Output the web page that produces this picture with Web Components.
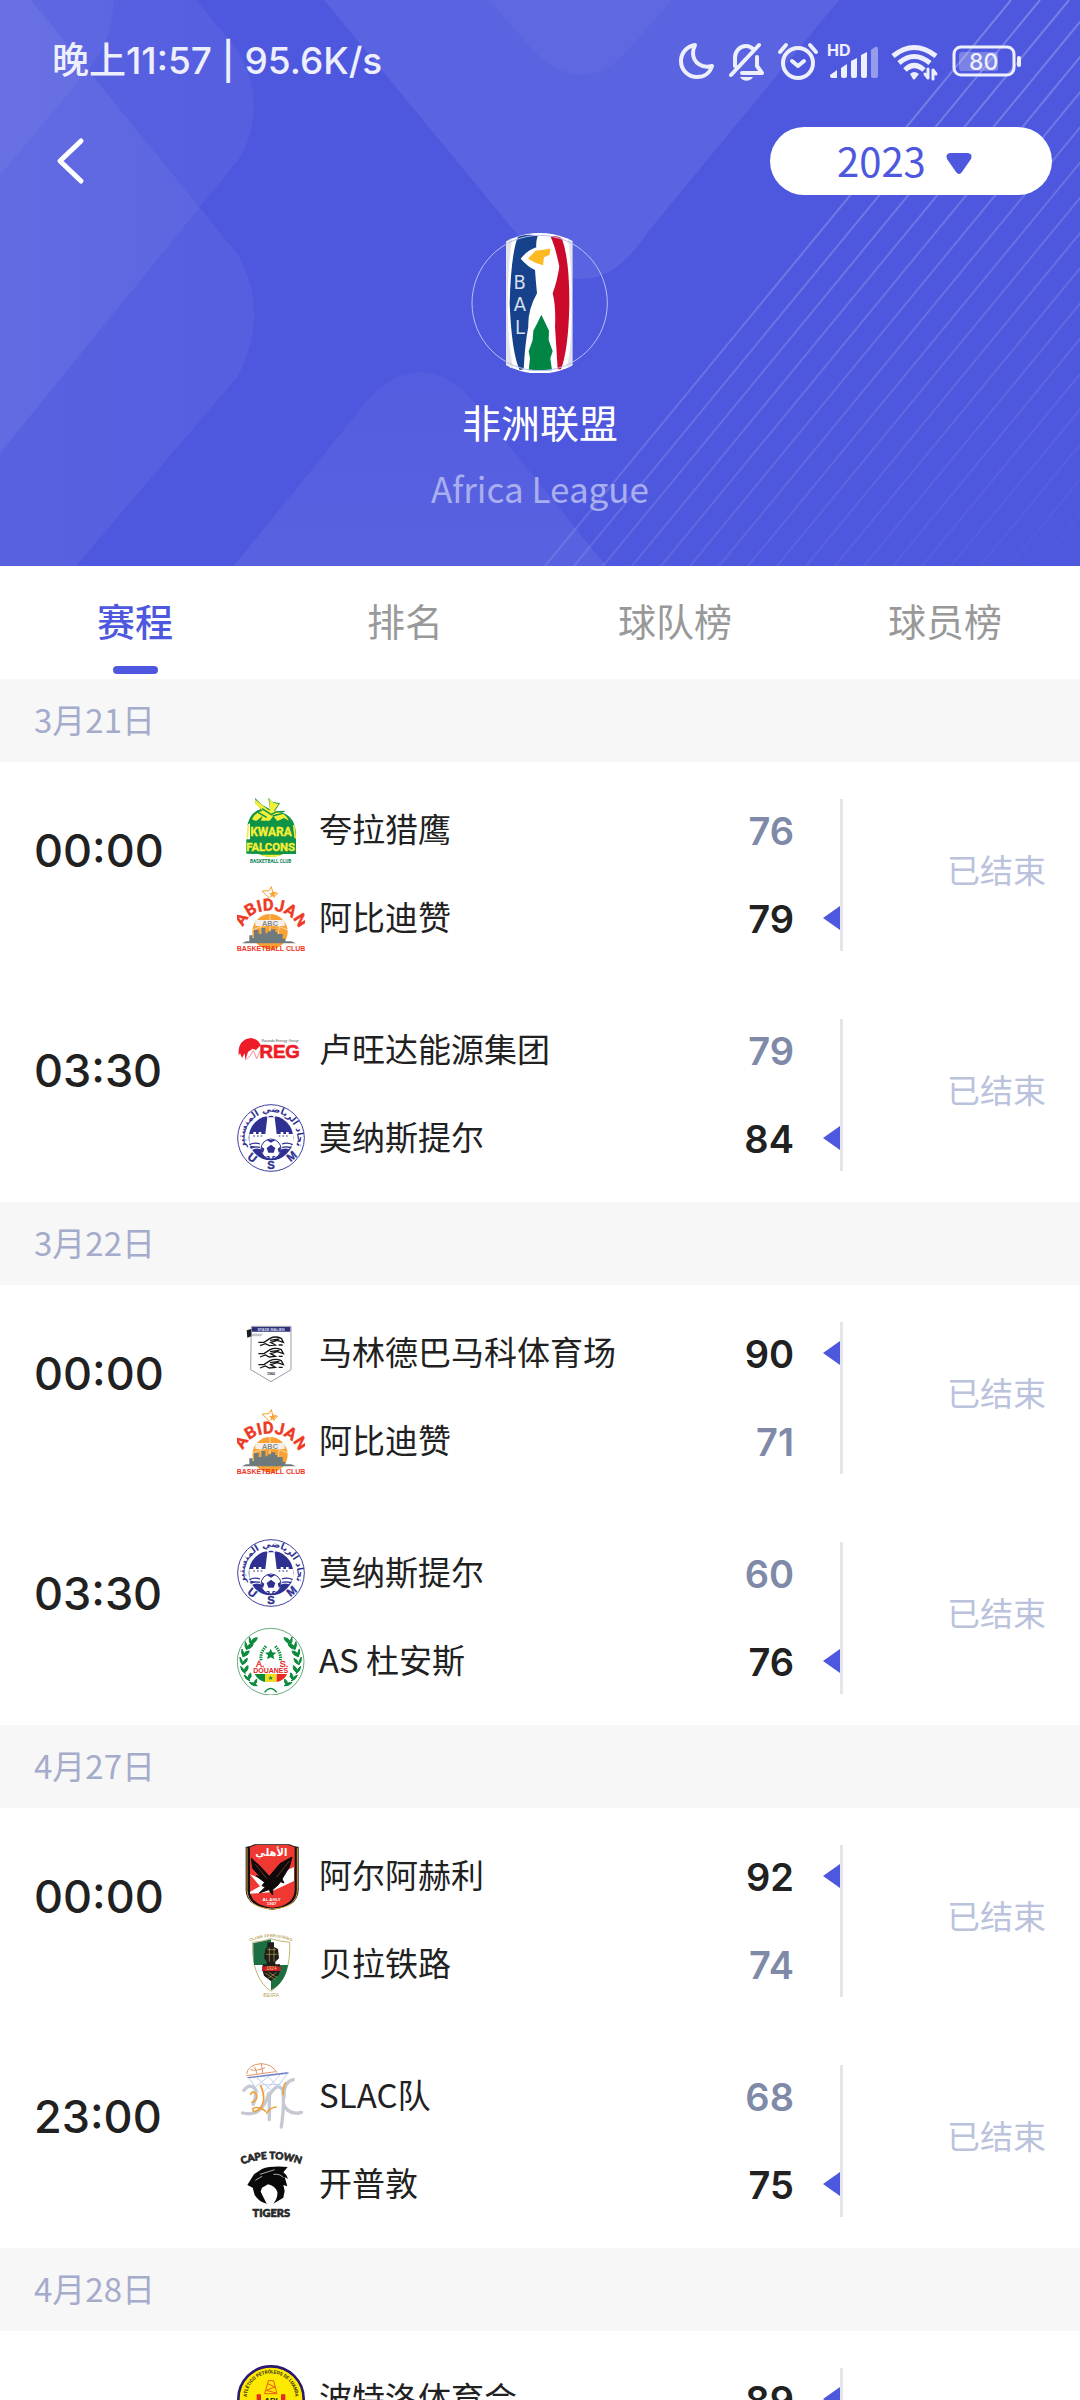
<!DOCTYPE html>
<html lang="zh-CN">
<head>
<meta charset="utf-8">
<meta name="viewport" content="width=device-width, initial-scale=1">
<title>非洲联盟</title>
<style>
  body { margin: 0; background: #fff; font-family: "Noto Sans CJK SC", sans-serif; color: #212121; }
</style>
</head>
<body>
<league-app></league-app>

<template id="tpl-app">
  <style>
    :host { display: flex; flex-direction: column; height: 100vh; overflow: hidden; }
    main { flex: 1; min-height: 0; overflow-y: auto; scrollbar-width: none; }
  </style>
  <league-header name="非洲联盟" subtitle="Africa League">
    <status-bar slot="status"></status-bar>
  </league-header>
  <tab-bar></tab-bar>
  <main></main>
</template>

<template id="tpl-status">
  <style>
    :host { display: flex; align-items: center; justify-content: space-between; height: 122px; padding: 0 58px 0 52px; color: #eeeffc; font-family: Inter, "Noto Sans CJK SC", sans-serif; font-size: 37px; line-height: 48px; font-weight: 500; white-space: nowrap; }
    .icons { display: flex; align-items: center; gap: 12px; }
    svg { display: block; overflow: visible; height: 40px; }
    text { font-family: Inter, sans-serif; fill: #eeeffc; }
    .s { fill: none; stroke: #eeeffc; stroke-width: 4; stroke-linecap: round; stroke-linejoin: round; }
    .f { fill: #eeeffc; }
  </style>
  <span>晚上11:57 | 95.6K/s</span>
  <div class="icons">
    <svg width="36" viewBox="0 0 36 40"><path class="s" d="M17 4C9 5 3 12 3 20c0 9 7 16 16 16 7 0 13-4 15-11-9 3-19-3-19-13 0-3 1-6 2-8z"/></svg>
    <svg width="38" viewBox="0 0 38 40"><path class="s" d="M9 25V17c0-7 5-12 11-12 3 0 5 1 7 3M31 16v9l5 7H16M33 4 5 34"/><path class="f" d="M14 36h13c-3 5-10 5-13 0z"/></svg>
    <svg width="40" viewBox="0 0 40 40"><g class="s"><circle cx="22" cy="22" r="15"/><path d="M16 20l6 5 6-5M4 11l6-7M40 11l-6-7"/></g></svg>
    <svg width="52" viewBox="0 0 52 40"><text x="-1" y="15" font-size="16" font-weight="700">HD</text><path class="f" d="M2 34l7-5v8H4q-2 0-2-2zM13 27l6-4v12q0 2-2 2h-2q-2 0-2-2zM23 20l6-3v18q0 2-2 2h-2q-2 0-2-2zM33 14l6-3v24q0 2-2 2h-2q-2 0-2-2z"/><path class="f" opacity=".45" d="M43 9l4-3q3-1 3 2v27q0 2-2 2h-3q-2 0-2-2z"/></svg>
    <svg width="48" viewBox="0 0 48 40"><g class="s" style="stroke-linecap:butt;stroke-width:5"><path d="M1 15q21-17 43 0M7 22q15-13 31 0M13 29q9-9 19 0"/></g><path class="f" d="M18 33q4-4 9 0l-4 5q-1 1-2 0z"/><path class="s" style="stroke-width:3" d="M36 28v9l-3-4M41 38v-9l3 4"/></svg>
    <svg width="70" viewBox="0 0 70 40"><rect class="s" style="stroke-width:3" x="2" y="6" width="60" height="28" rx="7"/><rect x="7" y="11" width="39" height="19" rx="3" fill="#fff" opacity=".25"/><rect class="f" x="65" y="15" width="4" height="11" rx="2"/><text x="17" y="29" font-size="23" font-weight="500">80</text></svg>
  </div>
</template>

<template id="tpl-header">
  <style>
    :host { display: block; position: relative; height: 566px; background: #4e58de; color: #fff; overflow: hidden; flex: none; }
    .bg { position: absolute; inset: 0; width: 100%; height: 100%; }
    .content { position: relative; display: flex; flex-direction: column; }
    nav { display: flex; align-items: center; justify-content: space-between; height: 78px; padding: 0 28px 0 48px; }
    .back { background: none; border: 0; padding: 0; width: 44px; height: 60px; display: flex; align-items: center; }
    .year { position: relative; display: block; }
    select { appearance: none; display: block; width: 282px; height: 68px; border: 0; border-radius: 34px; background: #fff; color: #4e58de; font: 400 40px/60px "Noto Sans CJK SC", sans-serif; padding: 0 0 3px 67px; }
    .year svg { position: absolute; right: 79px; top: 25px; pointer-events: none; }
    .emblem { align-self: center; margin-top: 33px; }
    .emblem svg { display: block; }
    h1 { margin: 18px 0 0; font-size: 39px; line-height: 60px; font-weight: 400; text-align: center; }
    p { margin: 8px 0 0; font-size: 35px; line-height: 57px; text-align: center; color: #a9aeef; }
  </style>
  <svg class="bg" viewBox="0 0 1080 566" preserveAspectRatio="xMidYMid slice" aria-hidden="true">
    <defs>
      <linearGradient id="sideglow" x1="0" y1="0" x2="1" y2="0"><stop offset="0" stop-color="#fff" stop-opacity=".06"/><stop offset="1" stop-color="#fff" stop-opacity=".04"/></linearGradient>
      <linearGradient id="humpfade" x1="0" y1="0" x2="0" y2="1"><stop offset="0" stop-color="#fff" stop-opacity=".03"/><stop offset="1" stop-color="#fff" stop-opacity=".06"/></linearGradient>
      <linearGradient id="linefade" gradientUnits="userSpaceOnUse" x1="850" y1="100" x2="1080" y2="566"><stop offset="0" stop-color="#fff" stop-opacity=".24"/><stop offset="1" stop-color="#fff" stop-opacity="0"/></linearGradient>
    </defs>
    <path fill="url(#sideglow)" d="M0 0H196L238 51Q270 108 238 160L0 453Z"/>
    <path fill="url(#sideglow)" d="M0 0H31L238 255Q270 312 238 376L76 566H0Z"/>
    <path fill="#fff" opacity=".04" d="M0 0H114Q112 42 88 70L0 175Z"/>
    <path fill="#fff" opacity=".07" d="M324 0L516 233Q548 279 582 279Q617 279 647 233L839 0Z"/>
    <path fill="#fff" opacity=".03" d="M489 0L530 47Q556 75 582 75Q607 75 631 47L672 0Z"/>
    <path fill="url(#humpfade)" d="M234 566L372 395Q396 372 420 372Q444 372 468 395L606 566Z"/>
    <g id="rays" stroke="url(#linefade)" stroke-width="2"></g>
  </svg>
  <div class="content">
    <slot name="status"></slot>
    <nav>
      <button class="back" aria-label="返回"><svg width="44" height="48" viewBox="0 0 44 48"><path d="M33 4L12 24L33 44" fill="none" stroke="#fff" stroke-width="5" stroke-linecap="round" stroke-linejoin="round"/></svg></button>
      <label class="year"><select aria-label="赛季"><option>2023</option></select><svg width="28" height="24" viewBox="0 0 28 24"><path d="M5 1H23Q28 2 26 7L17 20Q14 24 11 20L2 7Q0 2 5 1Z" fill="#4e58de"/></svg></label>
    </nav>
    <div class="emblem">
      <svg width="140" height="140" viewBox="89 69 420 420" role="img" aria-label="BAL">
        <defs><clipPath id="disc"><circle cx="298" cy="280" r="211"/></clipPath></defs>
        <g clip-path="url(#disc)">
          <rect x="197" y="60" width="199" height="440" fill="#fff"/>
          <path d="M197 60h25q-18 60-20 210t24 230h-29zM396 60h-20q18 60 18 220t-22 220h24z" fill="#e3e3e8"/>
          <path d="M233 80Q265 70 292 78Q286 95 288 112Q262 120 241 146Q262 170 284 180Q286 210 290 250Q262 300 264 350Q254 400 250 478L238 480Q214 430 208 280Q212 130 233 80Z" fill="#15428b"/>
          <path d="M330 78Q355 76 365 86Q388 150 387 285Q384 420 362 478H352Q348 410 344 350Q347 290 337 250Q350 215 357 170Q345 110 330 78Z" fill="#cc0a2b"/>
          <path d="M263 146L286 122L330 116L328 134L311 142L308 166L285 158Z" fill="#fdb924"/>
          <path d="M303 314Q318 345 326 362L325 390L337 424L330 445L335 481H265L269 445L265 424L277 390L279 362Q290 342 303 314Z" fill="#008544"/>
          <g fill="#d5deec" font-family="'DejaVu Sans Condensed', 'Open Sans', sans-serif" font-weight="400" font-size="60" text-anchor="middle"><text x="238" y="237">B</text><text x="239" y="304">A</text><text x="239" y="371">L</text></g>
        </g>
        <circle cx="298" cy="279" r="203" fill="none" stroke="#b9bdf6" stroke-width="3"/>
      </svg>
    </div>
    <h1></h1>
    <p></p>
  </div>
</template>

<template id="tpl-tabs">
  <style>
    :host { display: grid; grid-template-columns: repeat(4, 1fr); height: 113px; background: #fff; flex: none; }
    button { display: flex; flex-direction: column; align-items: center; justify-content: flex-end; gap: 16px; border: 0; background: none; padding: 0 0 5px; color: #999; font: 400 38px/60px "Noto Sans CJK SC", sans-serif; }
    button::after { content: ""; width: 45px; height: 8px; border-radius: 4px; }
    button[aria-selected="true"] { color: #4e58de; font-weight: 500; }
    button[aria-selected="true"]::after { background: #4e58de; }
  </style>
</template>

<template id="tpl-day">
  <style>
    :host { display: block; }
    h2 { margin: 0; height: 83px; padding: 0 34px; background: #f7f7f7; color: #a5abcb; font-size: 33px; line-height: 80px; font-weight: 400; }
  </style>
  <h2></h2>
  <slot></slot>
</template>

<template id="tpl-match">
  <style>
    :host { display: flex; padding: 34px 34px 30px; background: #fff; }
    time { width: 203px; line-height: 110px; font-family: Inter, sans-serif; font-size: 45px; font-weight: 500; color: #212121; flex: none; }
    .teams { flex: 1; display: flex; flex-direction: column; gap: 20px; min-width: 0; }
    .rule { width: 3px; margin: 3px 0 1px; background: #e4e5ea; }
    .state { width: 203px; text-align: right; line-height: 147px; font-size: 33px; color: #bac2dc; }
  </style>
  <time></time>
  <div class="teams"><slot></slot></div>
  <div class="rule"></div>
  <div class="state">已结束</div>
</template>

<template id="tpl-team">
  <style>
    :host { display: flex; height: 68px; line-height: 70px; }
    .name { flex: 1; margin-left: 14px; font-size: 33px; line-height: 64px; white-space: nowrap; color: #212121; }
    .score { font-family: Inter, sans-serif; font-size: 38px; font-weight: 600; color: #7f89a8; }
    .mark { width: 17px; height: 24px; margin: 22px 0 0 29px; }
    :host([winner]) .score { color: #212121; }
    :host([winner]) .mark { background: #4e58de; clip-path: polygon(100% 0, 100% 100%, 0 50%); }
  </style>
  <team-logo></team-logo>
  <span class="name"></span>
  <span class="score"></span>
  <span class="mark"></span>
</template>

<script>
const LOGOS = {
  kwara: ['51 48 204 204', `
    <path d="M82 135Q92 95 122 88L105 66V54L126 74L150 88L145 53L158 66L180 70L165 92Q214 98 225 140L228 160V222L190 222Q152 240 116 222L79 221V178H90V130Z" fill="#0f9347"/>
    <path d="M96 118Q104 98 128 92L106 72L105 58L127 76L149 92L148 56L160 68L176 72L162 92Q193 94 207 122L192 114L172 124L160 108L148 124H122L128 108L108 124Z" fill="#f3ee3a"/>
    <path d="M110 95L140 112M126 86L154 104L168 96L194 94M158 108L188 100M95 124H212" stroke="#0f9347" stroke-width="4" fill="none"/>
    <path d="M85 135L82 175M221 135L226 175" stroke="#f3ee3a" stroke-width="5"/>
    <g font-family="Roboto, sans-serif" font-weight="700" text-anchor="middle" fill="#f7ee35" stroke="#f7ee35" stroke-width="1"><text x="153" y="168" font-size="36">KWARA</text><text x="152" y="214" font-size="34">FALCONS</text></g>
    <path d="M118 224Q153 238 188 224Z" fill="#f3ee3a"/>
    <text x="152" y="249" font-family="Roboto, sans-serif" font-weight="700" font-size="14" text-anchor="middle" fill="#0b7f5b">BASKETBALL CLUB</text>`],
  abidjan: ['51 312 204 204', `
    <circle cx="150" cy="455" r="53" fill="#f9a134"/>
    <path d="M150 402V490M98 450Q150 420 203 450M112 418Q132 450 122 490M188 418Q168 450 178 490" stroke="#fcd9a4" stroke-width="3" fill="none"/>
    <path d="M135 375Q138 355 148 354L126 333L147 332L154 320L158 336L173 340L160 352" fill="none" stroke="#f9a134" stroke-width="3"/>
    <path d="M158 332l3 7 8 1-6 5 2 8-7-4-7 4 2-8-6-5 8-1z" fill="#f9a134"/>
    <path d="M66 490L78 484H88V466H98V474H102V450H116V462H124V444H136V460H143V454H153V448H166V456H172V462H188V476H196V484H214L228 490Z" fill="#6f7a7d"/>
    <rect x="106" y="420" width="88" height="18" fill="#f4efe8"/><text x="150" y="437" font-family="Liberation Sans, sans-serif" font-weight="700" font-size="22" text-anchor="middle" fill="#858b8d">ABC</text>
    <path id="arcA" d="M68 446Q84 392 150 392Q216 392 238 450" fill="none"/><text font-family="Roboto, sans-serif" font-weight="700" font-size="50" fill="#ee3a24" stroke="#ee3a24"><textPath href="#arcA" startOffset="50%" text-anchor="middle">ABIDJAN</textPath></text>
    <text x="153" y="513" font-family="Liberation Sans, sans-serif" font-weight="700" font-size="21" text-anchor="middle" fill="#f0351f">BASKETBALL CLUB</text>`],
  reg: ['51 48 204 204', `
    <path d="M56 166Q52 118 94 114Q116 118 122 136L108 150L98 146L84 156L76 180L74 160L66 174L60 160Z" fill="#ed1c27"/><path d="M76 180Q94 168 100 152L110 176L122 150" stroke="#f48b8f" stroke-width="3" fill="none"/>
    <text x="180" y="126" font-family="Liberation Sans, sans-serif" font-size="11" text-anchor="middle" fill="#555">Rwanda Energy Group</text>
    <text x="179" y="174" font-family="Liberation Sans, sans-serif" font-weight="700" font-size="56" text-anchor="middle" fill="#ed1c27" stroke="#ed1c27" stroke-width="2">REG</text>`],
  usm: ['51 312 204 204', `
    <circle cx="153" cy="414" r="100" fill="#fff" stroke="#3c3f9d" stroke-width="3"/><circle cx="153" cy="414" r="67" fill="#2e3192"/>
    <path d="M88 402H100V396H108V402H116V396H124V402H136L142 352H164L170 402H182V396H190V402H198V396H206V402H219V435L153 460L88 435Z" fill="#fff"/>
    <path d="M140 352V346H146V352H160V346H166V352" fill="#fff"/>
    <path d="M92 436Q104 428 116 436T140 436M96 448Q108 440 126 446M166 436Q178 428 190 436T214 436M180 448Q192 440 208 446" stroke="#fff" stroke-width="4" fill="none"/>
    <path d="M88 434Q104 426 120 432M186 432Q202 426 218 434M90 444Q104 438 120 442M186 442Q202 438 214 444" stroke="#2e3192" stroke-width="4" fill="none"/>
    <path d="M100 408H130M176 408H206" stroke="#2e3192" stroke-width="3" stroke-dasharray="5 6"/>
    <circle cx="153" cy="447" r="30" fill="#fff" stroke="#2e3192" stroke-width="3"/>
    <path d="M153 434l13 10-5 14h-16l-5-14zM140 420h26l-13 8zM125 440l8 6-4 14-5-8zM181 440l-8 6 4 14 5-8zM138 468l10 0 2 8zM168 468l-10 0-2 8z" fill="#2e3192"/>
    <path id="arcU" d="M79 443A79 79 0 1 1 227 443" fill="none"/><text font-family="DejaVu Sans, sans-serif" font-weight="700" font-size="27" fill="#2e3192"><textPath href="#arcU" startOffset="50%" text-anchor="middle">الاتحاد الرياضي المنستيري</textPath></text>
    <g font-family="Liberation Sans, sans-serif" font-weight="700" font-size="34" text-anchor="middle" fill="#2e3192" stroke="#2e3192"><text transform="translate(90 482) rotate(38)">U</text><text x="153" y="507">S</text><text transform="translate(222 478) rotate(-40)">M</text></g>`],
  malindi: ['51 54 204 204', `
    <path d="M94 76H213V206L153 242L92 206Z" fill="#fff" stroke="#9b9ca6" stroke-width="3"/><path d="M96 78H211V92H96Z" fill="#2b2e79"/>
    <text x="153" y="90" font-family="Liberation Sans, sans-serif" font-size="11" font-weight="700" text-anchor="middle" fill="#dfe0f2">STADE MALIEN</text>
    <path d="M80 88L94 84V106L82 110Z" fill="#1c1c24"/><path d="M96 98h34l-8 8H96z" fill="#c4c5cb"/>
    <g fill="none" stroke="#161616" stroke-width="4"><path id="cheetah" d="M115 124L132 124L150 112Q166 104 184 112L190 124L172 118L152 124L166 132L148 134L136 128L120 134M150 118L178 114M176 132L188 132"/><use href="#cheetah" y="34"/><use href="#cheetah" y="67"/></g>
    <text x="153" y="221" font-family="Liberation Sans, sans-serif" font-weight="700" font-size="11" text-anchor="middle" fill="#222">1960</text>`],
  douanes: ['51 318 204 204', `
    <circle cx="152" cy="422" r="100" fill="#fff" stroke="#16803b" stroke-width="2"/>
    <g id="wreath" fill="#0b8a3c" stroke="#0b8a3c" stroke-width="3"><path d="M112 350q-16 0-20 18 16-2 20-18zM88 348q-2 14 4 22 4-12-4-22zM100 368q-18 0-22 16 18 0 22-16zM76 362q-4 14 4 24 4-12-4-24zM88 390q-16 0-20 16 16 0 20-16zM66 384q-4 12 4 24 4-12-4-24zM82 412q-12 4-14 18 14-4 14-18zM60 408q-2 14 8 24 0-14-8-24zM84 434q-12 4-10 20 12-6 10-20zM62 436q0 14 14 22-2-14-14-22zM92 456q-10 6-6 20 12-8 6-20zM72 462q4 14 18 18-6-14-18-18zM110 474q-10 6-8 18 12-6 8-18zM88 484q8 12 24 10-10-10-24-10z"/></g>
    <use href="#wreath" transform="translate(304 0) scale(-1 1)"/>
    <path d="M138 376Q118 398 124 420M166 376Q186 398 180 420" fill="none" stroke="#0b8a3c" stroke-width="9" stroke-dasharray="4 3"/>
    <path d="M152 383l5 11 12 1-9 8 3 12-11-6-11 6 3-12-9-8 12-1z" fill="#0b8a3c"/>
    <path d="M104 459H135V483Q114 479 104 459Z" fill="#0b8a3c"/><path d="M135 459H170V483H135Z" fill="#f4dc23"/><path d="M170 459H201Q193 479 170 483Z" fill="#e82a23"/><path d="M152 464l2 5h5l-4 3 2 5-5-3-5 3 2-5-4-3h5z" fill="#0b8a3c"/>
    <path d="M134 514Q140 504 152 502Q164 504 170 514" fill="none" stroke="#0b8a3c" stroke-width="4"/>
    <g font-family="Liberation Sans, sans-serif" fill="#e5211d" stroke="#e5211d" text-anchor="middle"><text x="121" y="438" font-size="27">A.</text><text x="192" y="438" font-size="27">S.</text><text x="152" y="457" font-weight="700" font-size="21" stroke="none">DOUANES</text></g>`],
  ahly: ['51 63 204 204', `
    <path d="M77 78Q92 76 104 70H208Q222 76 236 78V206Q236 234 212 250Q184 264 157 266Q128 264 102 250Q77 234 77 206Z" fill="#141013"/>
    <path d="M81 80V206Q82 260 157 264Q232 260 232 206V80" fill="none" stroke="#d9a441" stroke-width="3"/>
    <path d="M90 78Q98 76 106 72H206Q216 76 224 78V206Q222 254 157 260Q92 254 90 206Z" fill="#ee3831"/>
    <path d="M90 160L128 176L150 170L222 138V180L150 214L90 218V212L120 196Z" fill="#fff"/>
    <path d="M94 112L120 136L148 166L180 128L216 108L208 138L186 174L192 186L182 182L174 192L158 206V222L146 206L118 216L136 198L126 194L134 184L108 164L120 166L98 142Z" fill="#0e0a0a" stroke="#0e0a0a" stroke-width="3" stroke-linejoin="round"/><path d="M106 130L140 172M208 120L170 168" stroke="#a54628" stroke-width="2"/>
    <text x="154" y="106" font-family="DejaVu Sans, sans-serif" font-weight="700" font-size="30" text-anchor="middle" fill="#fff">الأهلي</text>
    <g font-family="Liberation Sans, sans-serif" font-weight="700" font-size="13" fill="#fff" text-anchor="middle"><text x="155" y="241">AL AHLY</text><text x="155" y="253">1907</text></g>`],
  beira: ['51 327 204 204', `
    <path d="M98 364Q126 362 153 353Q180 362 209 364Q214 470 153 511Q94 470 98 364Z" fill="#fff" stroke="#c0b573" stroke-width="3"/>
    <path d="M100 366Q128 363 153 355V432H102Q99 400 100 366ZM153 432H204Q196 484 153 508Z" fill="#1c6e43"/>
    <path d="M142 364H162V378L174 384L177 412L166 422V430H180V450L176 462L152 480L132 464L128 450V430H140V422L132 410L136 384L142 378Z" fill="#211d18"/><path d="M142 386H168M138 400H172M148 380V422M162 380V422M136 456L166 476M146 454L172 470M170 454L142 474" stroke="#b6a24f" stroke-width="2" fill="none"/>
    <path d="M126 436H182V450H126Z" fill="#c5202b"/><text x="154" y="448" font-family="Liberation Sans, sans-serif" font-size="14" fill="#f3cf6b" text-anchor="middle">1924</text>
    <path id="arcB" d="M88 362Q153 334 218 362" fill="none"/><text font-family="Liberation Sans, sans-serif" font-weight="700" font-size="12" fill="#b9a75c"><textPath href="#arcB" startOffset="50%" text-anchor="middle">CLUBE FERROVIÁRIO</textPath></text>
    <text x="154" y="527" font-family="Liberation Sans, sans-serif" font-size="16" text-anchor="middle" fill="#b9a75c">BEIRA</text>`],
  slac: ['51 63 204 204', `
    <g fill="none" stroke-linecap="round"><path d="M72 148Q88 126 104 142Q112 160 100 190M68 216Q92 222 112 212Q136 196 146 158M148 236V156M150 160Q172 124 188 146Q194 190 184 258M192 170Q190 122 220 116M190 190Q206 224 244 214" stroke="#c6c8d2" stroke-width="10"/>
    <path d="M80 98Q84 70 124 68Q158 70 170 94M80 104L166 92M104 78L112 100M124 68L128 96M92 86Q110 92 134 80" stroke="#e2986a" stroke-width="3"/>
    <path d="M84 110L204 96M130 104L200 96" stroke="#7284c9" stroke-width="4"/><path d="M88 112L116 154M110 110L156 150M142 104L178 142M202 98L166 146M180 102L132 152M146 106L104 140M122 132L180 130" stroke="#bfd0ef" stroke-width="3"/>
    <path d="M122 134Q142 180 118 204Q100 220 98 204Q104 196 124 202L136 210M92 160Q96 148 108 158Q116 176 96 184M140 216Q150 200 168 198M190 160Q188 140 196 126" stroke="#eba23c" stroke-width="5"/></g>`],
  tigers: ['51 327 204 204', `
    <path d="M82 432L102 400L126 384Q152 374 203 378L190 394Q200 400 204 414L194 408L202 436L190 432L194 450L190 470L160 488Q174 470 172 452Q164 434 144 430L126 440L122 452L140 488Q118 484 104 462L98 440Z" fill="#090909"/><path d="M120 400L164 386M160 400Q182 398 190 410M106 418L126 406" stroke="#fff" stroke-width="2" fill="none"/>
    <path id="arcT" d="M60 372Q153 336 248 372" fill="none"/><g font-family="Lato, sans-serif" font-weight="900" fill="#282828" stroke="#282828" stroke-width="2"><text font-size="30"><textPath href="#arcT" startOffset="50%" text-anchor="middle">CAPE TOWN</textPath></text><text x="154" y="527" font-size="33" text-anchor="middle">TIGERS</text></g>`],
  petro: ['0 0 204 204', `
    <circle cx="102" cy="102" r="98" fill="#fdea00" stroke="#2b1a70" stroke-width="8"/>
    <path id="arcP" d="M30 110A73 73 0 1 1 174 110" fill="none"/><text font-family="Roboto, sans-serif" font-weight="700" font-size="14" fill="#2c2713"><textPath href="#arcP" startOffset="50%" text-anchor="middle">ATLÉTICO PETRÓLEOS DE LUANDA</textPath></text>
    <path d="M94 47H110L120 86H83ZM92 56L114 66L88 76L118 84" fill="none" stroke="#ee5a1f" stroke-width="3"/><path d="M59 88H72V160H59ZM132 88H145V160H132Z" fill="#e42a23"/><text x="102" y="114" font-family="Liberation Sans, sans-serif" font-weight="700" font-size="24" text-anchor="middle" fill="#211b17">API</text>`]
};

const DAYS = [
  ['3月21日', [
    ['00:00', ['kwara', '夸拉猎鹰', 76, 0], ['abidjan', '阿比迪赞', 79, 1]],
    ['03:30', ['reg', '卢旺达能源集团', 79, 0], ['usm', '莫纳斯提尔', 84, 1]]]],
  ['3月22日', [
    ['00:00', ['malindi', '马林德巴马科体育场', 90, 1], ['abidjan', '阿比迪赞', 71, 0]],
    ['03:30', ['usm', '莫纳斯提尔', 60, 0], ['douanes', 'AS 杜安斯', 76, 1]]]],
  ['4月27日', [
    ['00:00', ['ahly', '阿尔阿赫利', 92, 1], ['beira', '贝拉铁路', 74, 0]],
    ['23:00', ['slac', 'SLAC队', 68, 0], ['tigers', '开普敦', 75, 1]]]],
  ['4月28日', [
    ['00:00', ['petro', '波特洛体育会', 89, 1]]]]
];

class Base extends HTMLElement {
  mount(id) {
    const root = this.attachShadow({ mode: 'open' });
    root.append(document.getElementById(id).content.cloneNode(true));
    return root;
  }
}

customElements.define('status-bar', class extends Base {
  constructor() { super(); this.mount('tpl-status'); }
});

customElements.define('league-header', class extends Base {
  connectedCallback() {
    if (this.shadowRoot) return;
    const root = this.mount('tpl-header');
    root.querySelector('h1').textContent = this.getAttribute('name');
    root.querySelector('p').textContent = this.getAttribute('subtitle');
    let d = '';
    for (let i = 0; i < 19; i++) { const x = 1011 + i * 29; d += `<path d="M${x} 0L${x - 466} 566"/>`; }
    root.getElementById('rays').innerHTML = d;
  }
});

customElements.define('tab-bar', class extends Base {
  connectedCallback() {
    if (this.shadowRoot) return;
    const root = this.mount('tpl-tabs');
    this.setAttribute('role', 'tablist');
    ['赛程', '排名', '球队榜', '球员榜'].forEach((label, i) => {
      const b = document.createElement('button');
      b.setAttribute('role', 'tab');
      b.setAttribute('aria-selected', String(i === 0));
      b.textContent = label;
      b.addEventListener('click', () => root.querySelectorAll('button').forEach(o => o.setAttribute('aria-selected', String(o === b))));
      root.append(b);
    });
  }
});

customElements.define('team-logo', class extends HTMLElement {
  static observedAttributes = ['team'];
  constructor() { super(); this.attachShadow({ mode: 'open' }); }
  attributeChangedCallback(n, o, team) {
    const [box, art] = LOGOS[team];
    this.shadowRoot.innerHTML = `<style>:host{display:block;width:68px;height:68px;flex:none}svg{display:block;width:100%;height:100%}</style><svg viewBox="${box}" aria-hidden="true">${art}</svg>`;
  }
});

customElements.define('team-line', class extends Base {
  connectedCallback() {
    if (this.shadowRoot) return;
    const root = this.mount('tpl-team');
    root.querySelector('team-logo').setAttribute('team', this.getAttribute('logo'));
    root.querySelector('.name').textContent = this.getAttribute('name');
    root.querySelector('.score').textContent = this.getAttribute('score');
  }
});

customElements.define('match-row', class extends Base {
  connectedCallback() {
    if (this.shadowRoot) return;
    this.mount('tpl-match').querySelector('time').textContent = this.getAttribute('time');
  }
});

customElements.define('match-day', class extends Base {
  connectedCallback() {
    if (this.shadowRoot) return;
    this.mount('tpl-day').querySelector('h2').textContent = this.getAttribute('date');
  }
});

customElements.define('league-app', class extends Base {
  connectedCallback() {
    if (this.shadowRoot) return;
    const root = this.mount('tpl-app');
    root.querySelector('main').innerHTML = DAYS.map(([date, matches]) =>
      `<match-day date="${date}">` + matches.map(([time, ...teams]) =>
        `<match-row time="${time}">` + teams.map(([logo, name, score, won]) =>
          `<team-line logo="${logo}" name="${name}" score="${score}"${won ? ' winner' : ''}></team-line>`).join('') +
        '</match-row>').join('') + '</match-day>').join('');
  }
});
</script>
</body>
</html>
